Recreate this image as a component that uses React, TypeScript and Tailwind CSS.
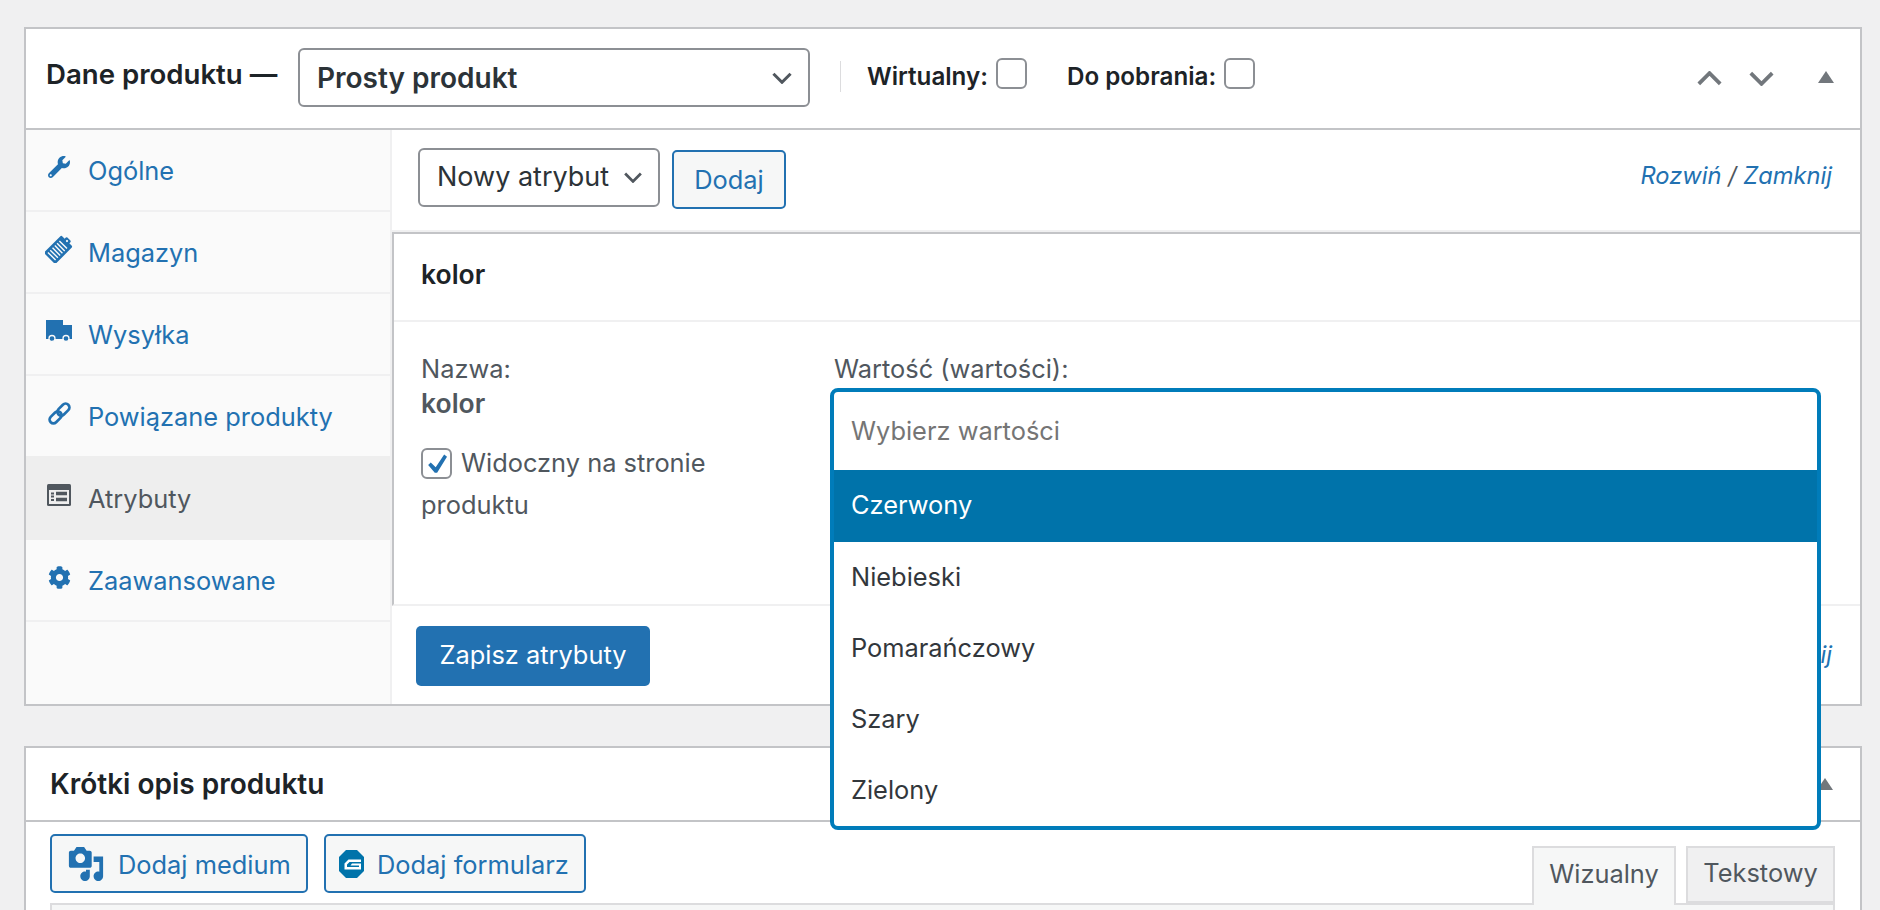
import { FaWrench, FaCog } from 'react-icons/fa';

function Chevron({ className }: { className: string }) {
  return (
    <svg viewBox="0 0 24 14" className={className} fill="none" stroke="currentColor" strokeWidth="3.500">
      <path d="M2 2l10 10L22 2" />
    </svg>
  );
}

function TagIcon() {
  return (
    <svg viewBox="0 0 26 26" className="h-[28px] w-[28px]">
      <g transform="rotate(45 13 13)">
        <rect x="5.500" y="2.500" width="15" height="23" rx="1.500" fill="#2271b1" />
        <rect x="10" y="0" width="6" height="4" rx="1" fill="#2271b1" />
        <circle cx="13" cy="2.500" r="1" fill="#fafafa" />
        <path d="M8 7.500h10M8 10.500h10M8 13.500h10M8 16.500h10M8 19.500h10M8 22.500h10" stroke="#fafafa" strokeWidth="1.300" />
      </g>
    </svg>
  );
}

function TruckIcon() {
  return (
    <svg viewBox="0 0 26 22" className="h-[22px] w-[26px]">
      <path d="M0 0h17v5h9v14H0z" fill="#2271b1" />
      <circle cx="6" cy="18.500" r="3" fill="#2271b1" stroke="#fafafa" strokeWidth="1.300" />
      <circle cx="20" cy="18.500" r="3" fill="#2271b1" stroke="#fafafa" strokeWidth="1.300" />
    </svg>
  );
}

function LinkIcon() {
  return (
    <svg viewBox="0 0 24 24" className="h-[23px] w-[23px]" fill="none" stroke="#2271b1" strokeWidth="2.800">
      <g transform="rotate(-45 12 12)">
        <rect x="-1" y="8" width="14.500" height="8" rx="4" />
        <rect x="10.500" y="8" width="14.500" height="8" rx="4" />
      </g>
    </svg>
  );
}

function TableIcon() {
  return (
    <svg viewBox="0 0 24 22" className="h-[22px] w-[24px]">
      <rect width="24" height="22" rx="1.500" fill="#50575e" />
      <rect x="2" y="6" width="20" height="14" fill="#eeeeee" />
      <path d="M4 9.500h3M4 12.500h3M4 16h3" stroke="#50575e" strokeWidth="2" />
      <path d="M9 9.500h11M9 15.500h11" stroke="#50575e" strokeWidth="3.500" />
    </svg>
  );
}

function MediaIcon() {
  return (
    <svg viewBox="0 0 20 20" className="h-[38px] w-[38px] shrink-0" fill="#2271b1">
      <path d="M13 11V4c0-.55-.45-1-1-1h-1.670L9 1H5L3.670 3H2c-.55 0-1 .45-1 1v7c0 .55.45 1 1 1h10c.55 0 1-.45 1-1zM7 4.500c1.380 0 2.500 1.120 2.500 2.500S8.380 9.500 7 9.500 4.500 8.380 4.500 7 5.620 4.500 7 4.500zM14 6h5v10.500c0 1.380-1.120 2.500-2.500 2.500S14 17.880 14 16.500s1.120-2.500 2.500-2.500c.17 0 .34.020.5.050V9h-3V6zm-4 8.050V13h2v3.500c0 1.380-1.120 2.500-2.500 2.500S7 17.880 7 16.500 8.120 14 9.500 14c.17 0 .34.020.5.050z" />
    </svg>
  );
}

function FormIcon() {
  return (
    <svg viewBox="0 0 25 28" className="h-[28px] w-[25px] shrink-0">
      <path d="M7 0h11l7 7v14l-7 7H7l-7-7V7z" fill="#0073aa" />
      <path d="M9.500 9.500H22V12H10.500L8 14.500V17H20v-1.500h-8.500l1.500-2h9v6H5.500v-6z" fill="#ffffff" />
    </svg>
  );
}

const navItems = [
  { label: 'Ogólne', icon: <FaWrench className="h-[22px] w-[22px]" /> },
  { label: 'Magazyn', icon: <TagIcon /> },
  { label: 'Wysyłka', icon: <TruckIcon /> },
  { label: 'Powiązane produkty', icon: <LinkIcon /> },
  { label: 'Atrybuty', icon: <TableIcon />, active: true },
  { label: 'Zaawansowane', icon: <FaCog className="h-[23px] w-[23px]" /> },
];

const options = ['Niebieski', 'Pomarańczowy', 'Szary', 'Zielony'];

function CheckBox({ checked }: { checked?: boolean }) {
  return (
    <span className="flex h-[31px] w-[31px] shrink-0 items-center justify-center rounded-[6px] border-2 border-[#8c8f94] bg-white">
      {checked && (
        <svg viewBox="0 0 20 20" className="h-[26px] w-[26px]" fill="#2271b1">
          <path d="M15.500 3.500l2.200 1.600-7.600 12.400H8.300L3.200 11.600l2-1.900 3.800 3.600z" />
        </svg>
      )}
    </span>
  );
}

function ExpandLinks() {
  return (
    <span className="text-[23.7px] italic text-[#50575e]">
      <span className="text-[#2271b1]">Rozwiń</span> / <span className="text-[#2271b1]">Zamknij</span>
    </span>
  );
}

export default function App() {
  return (
    <div className="h-[910px] overflow-hidden bg-[#f0f0f1] pl-[24px] pr-[18px] pt-[27px] font-['Inter',sans-serif] text-[25.4px] text-[#50575e]">
      {/* Dane produktu */}
      <div className="flex h-[679px] flex-col border-2 border-[#c3c4c7] bg-white">
        <div className="flex h-[101px] shrink-0 items-center border-b-2 border-[#c3c4c7] pl-[20px] pr-[26px]">
          <span className="-mt-[8px] w-[252px] whitespace-nowrap text-[27.6px] font-semibold text-[#1d2327]">Dane produktu —</span>
          <div className="-mt-[3px] flex h-[59px] w-[512px] items-center justify-between rounded-[6px] border-2 border-[#8c8f94] px-[17px] pt-[2px] text-[28px] font-semibold text-[#2c3338]">
            Prosty produkt
            <Chevron className="-mr-[2px] h-[12px] w-[22px] text-[#50575e]" />
          </div>
          <span className="-mt-[4px] ml-[30px] mr-[26px] h-[31px] w-[1px] bg-[#dcdcde]" />
          <div className="-mt-[3px] flex items-center text-[24.2px] font-semibold text-[#1d2327]">
            Wirtualny:
            <span className="-mt-[6px] ml-[8px]"><CheckBox /></span>
            <span className="ml-[40px]">Do pobrania:</span>
            <span className="-mt-[6px] ml-[8px]"><CheckBox /></span>
          </div>
          <div className="ml-auto flex items-center text-[#72777c]">
            <Chevron className="h-[15px] w-[27px] rotate-180" />
            <Chevron className="ml-[25px] h-[15px] w-[27px]" />
            <span className="-mt-[3px] ml-[43px] h-0 w-0 border-x-[8px] border-b-[12px] border-x-transparent border-b-[#72777c]" />
          </div>
        </div>

        <div className="flex min-h-0 flex-1">
          <div className="w-[366px] shrink-0 border-r-2 border-[#f0f0f1] bg-[#fafafa]">
            {navItems.map((item) => (
              <div
                key={item.label}
                className={
                  item.active
                    ? 'flex h-[84px] -mt-[2px] items-center bg-[#eeeeee] pt-[2px] text-[#50575e]'
                    : 'flex h-[82px] items-center border-b-2 border-[#f0f0f1] pt-[2px] text-[#2271b1]'
                }
              >
                <span className="-mt-[8px] flex w-[62px] shrink-0 justify-center pl-[4px]">{item.icon}</span>
                {item.label}
              </div>
            ))}
          </div>

          <div className="flex min-w-0 flex-1 flex-col">
            <div className="flex h-[102px] shrink-0 items-center justify-between border-b-2 border-[#f0f0f1] pl-[26px] pr-[28px]">
              <div className="flex items-center">
                <div className="-mt-[5px] flex h-[59px] w-[242px] items-center justify-between rounded-[6px] border-2 border-[#8c8f94] px-[17px] text-[27px] text-[#2c3338]">
                  Nowy atrybut
                  <Chevron className="-mr-[2px] h-[11px] w-[20px] shrink-0 text-[#50575e]" />
                </div>
                <div className="-mt-[1px] ml-[12px] flex h-[59px] w-[114px] items-center justify-center rounded-[5px] border-2 border-[#2271b1] bg-[#f6f7f7] pt-[2px] text-[#2271b1]">
                  Dodaj
                </div>
              </div>
              <span className="-mt-[10px]"><ExpandLinks /></span>
            </div>

            <div className="h-[374px] shrink-0 border-b-2 border-l-2 border-t-2 border-b-[#f0f0f1] border-l-[#c3c4c7] border-t-[#c3c4c7]">
              <div className="flex h-[88px] items-center border-b-2 border-[#f0f0f1] pb-[4px] pl-[27px] text-[26.5px] font-semibold text-[#1d2327]">
                kolor
              </div>
              <div className="flex pl-[27px] pt-[30px]">
                <div className="w-[300px] shrink-0 leading-[34px]">
                  <div>Nazwa:</div>
                  <div className="text-[26.5px] font-semibold">kolor</div>
                  <div className="mt-[22px] leading-[42px]">
                    <div className="flex items-center whitespace-nowrap">
                      <CheckBox checked />
                      <span className="ml-[9px]">Widoczny na stronie</span>
                    </div>
                    <div>produktu</div>
                  </div>
                </div>
                <div className="relative ml-[113px] flex-1 leading-[34px]">
                  Wartość (wartości):
                  <div className="absolute -left-[4px] top-[36px] z-10 w-[991px] overflow-hidden rounded-[8px] border-4 border-[#007cba] bg-white text-[#32373c]">
                    <div className="flex h-[78px] items-center pl-[17px] text-[#757575]">Wybierz wartości</div>
                    <div className="flex h-[72px] items-center bg-[#0073aa] pb-[2px] pl-[17px] text-white">Czerwony</div>
                    {options.map((option) => (
                      <div key={option} className="flex h-[71px] items-center pb-[2px] pl-[17px]">{option}</div>
                    ))}
                  </div>
                </div>
              </div>
            </div>

            <div className="flex flex-1 items-center justify-between pl-[24px] pr-[28px]">
              <div className="mt-[1px] flex h-[60px] w-[234px] items-center justify-center rounded-[5px] bg-[#2271b1] text-white">
                Zapisz atrybuty
              </div>
              <span className="-mt-[2px]"><ExpandLinks /></span>
            </div>
          </div>
        </div>
      </div>

      {/* Krótki opis produktu */}
      <div className="mt-[40px] border-2 border-[#c3c4c7] bg-white">
        <div className="flex h-[74px] items-center justify-between border-b-2 border-[#c3c4c7] pl-[24px] pr-[27px]">
          <span className="text-[28px] font-semibold text-[#1d2327]">Krótki opis produktu</span>
          <span className="h-0 w-0 border-x-[8px] border-b-[12px] border-x-transparent border-b-[#72777c]" />
        </div>
        <div className="flex items-end justify-between pl-[24px] pr-[25px] pt-[12px]">
          <div className="mb-[10px] flex gap-[16px]">
            <div className="flex h-[59px] w-[258px] items-center rounded-[5px] border-2 border-[#2271b1] bg-[#f6f7f7] pl-[15px] text-[#2271b1]">
              <MediaIcon />
              <span className="ml-[13px] whitespace-nowrap pt-[3px]">Dodaj medium</span>
            </div>
            <div className="flex h-[59px] w-[262px] items-center rounded-[5px] border-2 border-[#2271b1] bg-[#f6f7f7] pl-[13px] text-[#2271b1]">
              <FormIcon />
              <span className="ml-[13px] whitespace-nowrap pt-[3px]">Dodaj formularz</span>
            </div>
          </div>
          <div className="relative z-[1] -mb-[2px] flex gap-[10px] text-[#50575e]">
            <div className="flex h-[59px] w-[144px] items-center justify-center border-2 border-b-0 border-[#dcdcde] bg-[#f6f7f7] pb-[4px]">Wizualny</div>
            <div className="flex h-[57px] w-[149px] items-center justify-center border-2 border-[#dcdcde] bg-[#f0f0f1] pb-[2px]">Tekstowy</div>
          </div>
        </div>
        <div className="ml-[24px] mr-[25px] h-[40px] border-2 border-[#dcdcde] bg-[#f6f7f7]" />
      </div>
    </div>
  );
}
